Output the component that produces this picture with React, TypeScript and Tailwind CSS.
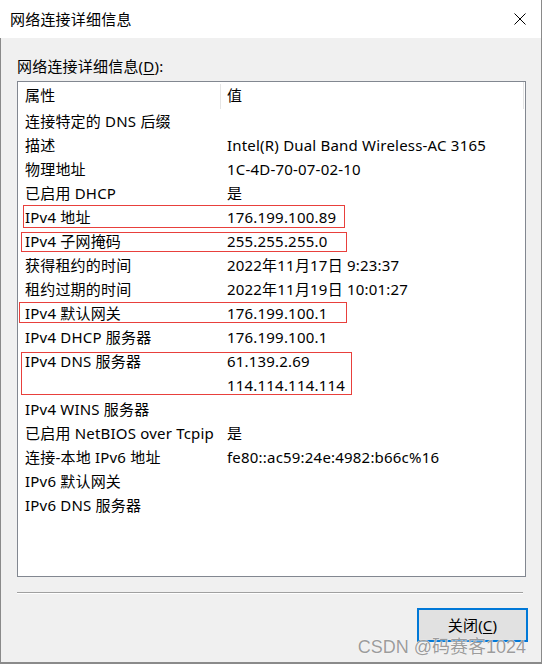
import React from 'react';

interface Row {
  label: string;
  values: string[];
  mark?: string;
}

const ROWS: Row[] = [
  { label: '连接特定的 DNS 后缀', values: [''] },
  { label: '描述', values: ['Intel(R) Dual Band Wireless-AC 3165'] },
  { label: '物理地址', values: ['1C-4D-70-07-02-10'] },
  { label: '已启用 DHCP', values: ['是'] },
  { label: 'IPv4 地址', values: ['176.199.100.89'], mark: 'left-[5px] top-0 w-[322px] h-[23px]' },
  { label: 'IPv4 子网掩码', values: ['255.255.255.0'], mark: 'left-[3px] top-[3px] w-[326px] h-[20px]' },
  { label: '获得租约的时间', values: ['2022年11月17日 9:23:37'] },
  { label: '租约过期的时间', values: ['2022年11月19日 10:01:27'] },
  { label: 'IPv4 默认网关', values: ['176.199.100.1'], mark: 'left-[1px] top-[1px] w-[328px] h-[21px]' },
  { label: 'IPv4 DHCP 服务器', values: ['176.199.100.1'] },
  { label: 'IPv4 DNS 服务器', values: ['61.139.2.69', '114.114.114.114'], mark: 'left-[3px] top-[3px] w-[331px] h-[43px]' },
  { label: 'IPv4 WINS 服务器', values: [''] },
  { label: '已启用 NetBIOS over Tcpip', values: ['是'] },
  { label: '连接-本地 IPv6 地址', values: ['fe80::ac59:24e:4982:b66c%16'] },
  { label: 'IPv6 默认网关', values: [''] },
  { label: 'IPv6 DNS 服务器', values: [''] },
];

export default function App() {
  return (
    <div className="relative w-[542px] h-[664px] flex flex-col bg-[#f0f0f0] border-r border-[#8a8a8a] text-[15px] tracking-[0.2px] text-black font-['Noto_Sans','Noto_Sans_CJK_SC',sans-serif]">
      {/* title bar */}
      <div className="h-[38px] shrink-0 bg-white flex items-center justify-between pl-[10px] pr-[15px]">
        <span className="leading-none">网络连接详细信息</span>
        <svg width="12" height="12" viewBox="0 0 12 12" className="text-black">
          <path d="M0.5 0.5 L11.5 11.5 M11.5 0.5 L0.5 11.5" stroke="currentColor" strokeWidth="1" />
        </svg>
      </div>

      <div className="flex-1 flex flex-col border-l border-b-2 border-[#8a8a8a] pl-[16px] pr-[15px]">
        <div className="h-[24px] mt-[16px] mb-[3px] flex items-center">
          网络连接详细信息(<span className="underline underline-offset-2">D</span>):
        </div>

        {/* list */}
        <div className="w-[509px] h-[496px] border border-[#828790] bg-white flex flex-col">
          <div className="h-[27px] flex border-r border-[#e3e3e3] mr-[1px]">
            <div className="w-[202px] pl-[7px] flex items-center">属性</div>
            <div className="w-px bg-[#e5e5e5] mt-[2px]" />
            <div className="flex-1 pl-[6px] flex items-center">值</div>
          </div>
          {ROWS.map((row) => (
            <div key={row.label} className="relative">
              {row.values.map((v, i) => (
                <div key={i} className="h-[24px] flex items-center whitespace-nowrap">
                  <div className="w-[202px] pl-[7px]">{i === 0 ? row.label : ''}</div>
                  <div className="pl-[7px]">{v}</div>
                </div>
              ))}
              {row.mark && <div className={`absolute border border-[#e8403c] ${row.mark}`} />}
            </div>
          ))}
        </div>

        {/* separator */}
        <div className="mt-[15px] w-[506px] h-[2px] border-t border-[#a0a0a0] border-b border-b-white" />

        <div className="flex justify-end mt-[14px]">
          <button className="w-[111px] h-[34px] bg-[#e1e1e1] border-2 border-[#0078d7] flex items-center justify-center mr-[-2px]">
            关闭(<span className="underline underline-offset-2">C</span>)
          </button>
        </div>
      </div>

      {/* watermark */}
      <div className="absolute right-[15px] bottom-[8px] text-[18px] leading-none tracking-normal text-[#9c9c9c] [text-shadow:0_0_1px_#fff,0_0_1px_#fff] font-['Liberation_Sans','Noto_Sans_CJK_SC',sans-serif]">
        CSDN @码赛客1024
      </div>
    </div>
  );
}
